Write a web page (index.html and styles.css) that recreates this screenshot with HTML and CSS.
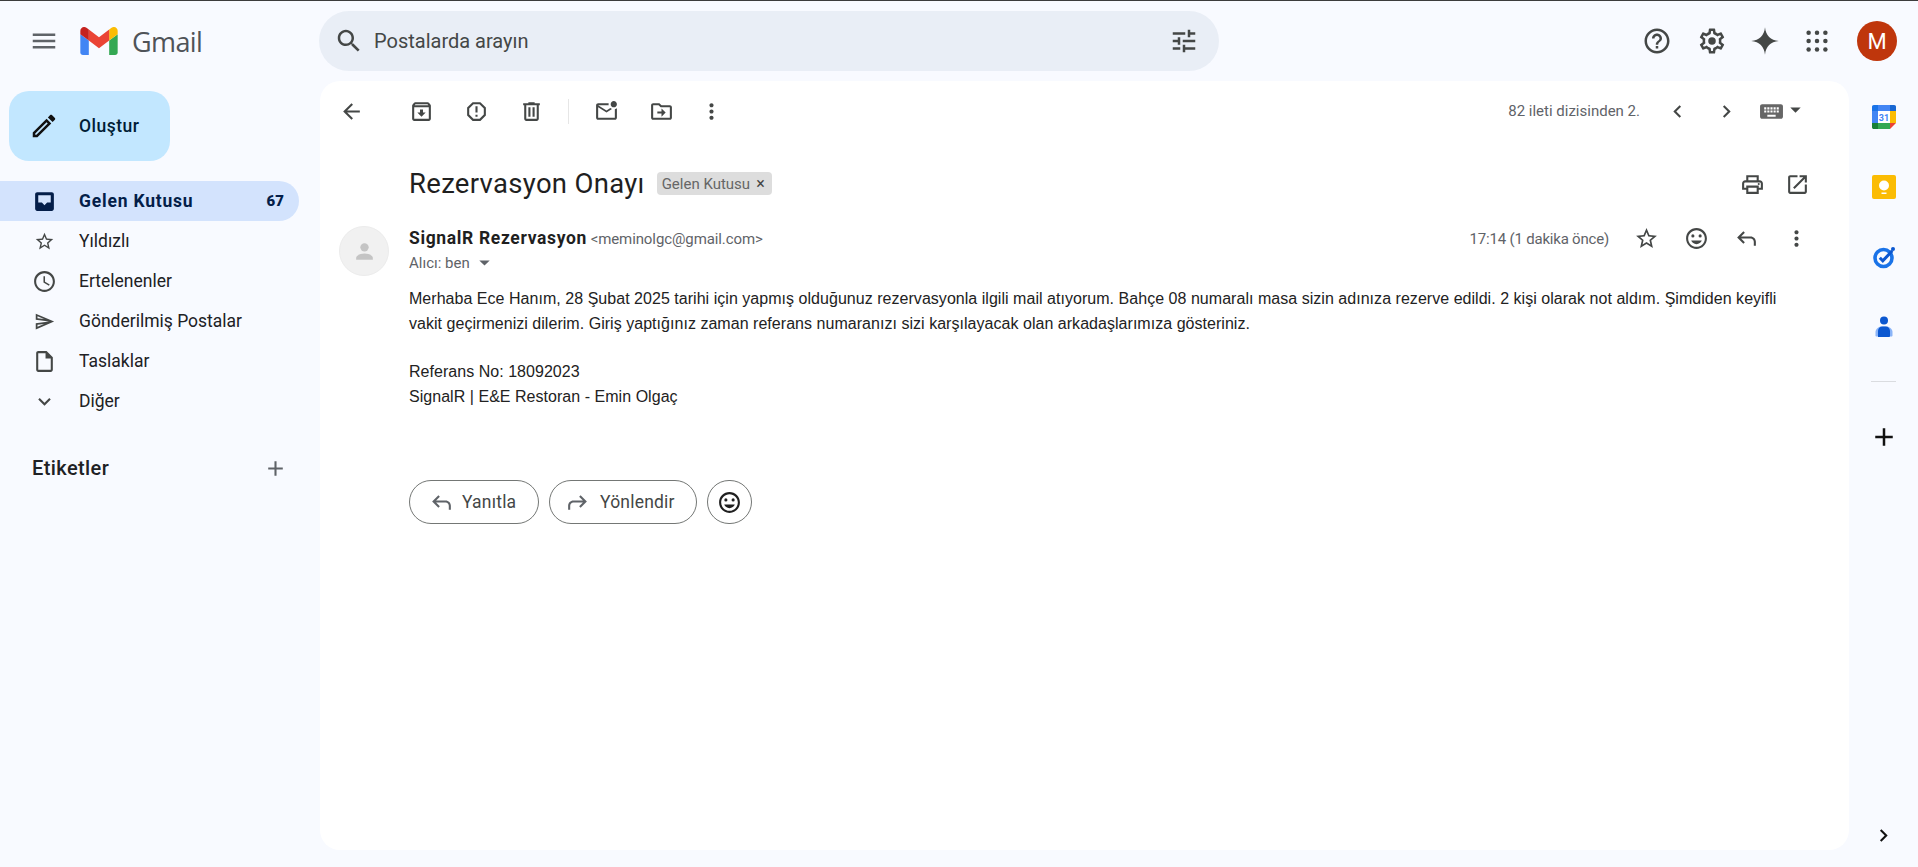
FILE: index.html
```html
<!DOCTYPE html>
<html lang="tr">
<head>
  <meta charset="utf-8">
  <title>Rezervasyon Onayı - Gmail</title>
  <link rel="stylesheet" href="styles.css">
</head>
<body>
  <!-- Icon sprite -->
  <svg class="sprite" xmlns="http://www.w3.org/2000/svg">
    <symbol id="i-menu" viewBox="0 0 24 24"><path d="M3 18h18v-2H3v2zm0-5h18v-2H3v2zm0-7v2h18V6H3z"/></symbol>
    <symbol id="i-search" viewBox="0 0 24 24"><path d="M15.5 14h-.79l-.28-.27C15.41 12.59 16 11.11 16 9.5 16 5.91 13.09 3 9.5 3S3 5.91 3 9.5 5.91 16 9.5 16c1.61 0 3.09-.59 4.23-1.57l.27.28v.79l5 4.99L20.49 19l-4.99-5zm-6 0C7.01 14 5 11.99 5 9.5S7.01 5 9.5 5 14 7.01 14 9.5 11.99 14 9.5 14z"/></symbol>
    <symbol id="i-tune" viewBox="0 0 24 24"><path d="M3 17v2h6v-2H3zM3 5v2h10V5H3zm10 16v-2h8v-2h-8v-2h-2v6h2zM7 9v2H3v2h4v2h2V9H7zm14 4v-2H11v2h10zm-6-4h2V7h4V5h-4V3h-2v6z"/></symbol>
    <symbol id="i-help" viewBox="0 0 24 24"><path d="M11 18h2v-2h-2v2zm1-16C6.48 2 2 6.48 2 12s4.48 10 10 10 10-4.48 10-10S17.52 2 12 2zm0 18c-4.41 0-8-3.59-8-8s3.59-8 8-8 8 3.59 8 8-3.59 8-8 8zm0-14c-2.21 0-4 1.79-4 4h2c0-1.1.9-2 2-2s2 .9 2 2c0 2-3 1.75-3 5h2c0-2.25 3-2.5 3-5 0-2.21-1.79-4-4-4z"/></symbol>
    <symbol id="i-settings" viewBox="0 0 24 24"><path d="M19.43 12.98c.04-.32.07-.64.07-.98 0-.34-.03-.66-.07-.98l2.11-1.65c.19-.15.24-.42.12-.64l-2-3.46c-.09-.16-.26-.25-.44-.25-.06 0-.12.01-.17.03l-2.49 1c-.52-.4-1.08-.73-1.69-.98l-.38-2.65C14.46 2.18 14.25 2 14 2h-4c-.25 0-.46.18-.49.42l-.38 2.65c-.61.25-1.17.59-1.69.98l-2.49-1c-.06-.02-.12-.03-.18-.03-.17 0-.34.09-.43.25l-2 3.46c-.13.22-.07.49.12.64l2.11 1.65c-.04.32-.07.65-.07.98 0 .33.03.66.07.98l-2.11 1.65c-.19.15-.24.42-.12.64l2 3.46c.09.16.26.25.44.25.06 0 .12-.01.17-.03l2.49-1c.52.4 1.08.73 1.69.98l.38 2.65c.03.24.24.42.49.42h4c.25 0 .46-.18.49-.42l.38-2.65c.61-.25 1.17-.59 1.69-.98l2.49 1c.06.02.12.03.18.03.17 0 .34-.09.43-.25l2-3.46c.12-.22.07-.49-.12-.64l-2.11-1.65zm-1.98-1.71c.04.31.05.52.05.73 0 .21-.02.43-.05.73l-.14 1.13.89.7 1.08.84-.7 1.21-1.27-.51-1.04-.42-.9.68c-.43.32-.84.56-1.25.73l-1.06.43-.16 1.13-.2 1.35h-1.4l-.19-1.35-.16-1.13-1.06-.43c-.43-.18-.83-.41-1.23-.71l-.91-.7-1.06.43-1.27.51-.7-1.21 1.08-.84.89-.7-.14-1.13c-.03-.31-.05-.54-.05-.74s.02-.43.05-.73l.14-1.13-.89-.7-1.08-.84.7-1.21 1.27.51 1.04.42.9-.68c.43-.32.84-.56 1.25-.73l1.06-.43.16-1.13.2-1.35h1.39l.19 1.35.16 1.13 1.06.43c.43.18.83.41 1.23.71l.91.7 1.06-.43 1.27-.51.7 1.21-1.07.85-.89.7.14 1.13z"/><circle cx="12" cy="12" r="3"/></symbol>
    <symbol id="i-spark" viewBox="0 0 24 24"><path d="M12 1c.6 6.5 4.5 10.4 11 11-6.5.6-10.4 4.5-11 11-.6-6.500-4.500-10.400-11-11 6.500-.6 10.400-4.500 11-11z"/></symbol>
    <symbol id="i-apps" viewBox="0 0 24 24"><circle cx="5.300" cy="5.300" r="1.800"/><circle cx="12" cy="5.300" r="1.800"/><circle cx="18.700" cy="5.300" r="1.800"/><circle cx="5.300" cy="12" r="1.800"/><circle cx="12" cy="12" r="1.800"/><circle cx="18.700" cy="12" r="1.800"/><circle cx="5.300" cy="18.700" r="1.800"/><circle cx="12" cy="18.700" r="1.800"/><circle cx="18.700" cy="18.700" r="1.800"/></symbol>
    <symbol id="i-pencil" viewBox="0 0 24 24"><path d="M3 17.25V21h3.75L17.81 9.94l-3.75-3.75L3 17.25zM5.920 19H5v-.92l9.060-9.060.92.92L5.920 19zM20.710 5.630l-2.340-2.340c-.2-.2-.45-.29-.71-.29s-.51.1-.7.29l-1.830 1.830 3.750 3.750 1.830-1.830c.39-.39.39-1.020 0-1.410z"/></symbol>
    <symbol id="i-inbox" viewBox="0 0 24 24"><path fill-rule="evenodd" d="M5 3h14c1.100 0 2 .9 2 2v14c0 1.100-.9 2-2 2H5c-1.100 0-2-.9-2-2V5c0-1.100.9-2 2-2zm1 3v7h3.500l2.500 2.500 2.500-2.500H18V6H6z"/></symbol>
    <symbol id="i-star" viewBox="0 0 24 24"><path d="M22 9.240l-7.190-.62L12 2 9.190 8.630 2 9.240l5.460 4.730L5.820 21 12 17.270 18.180 21l-1.630-7.030L22 9.240zM12 15.400l-3.760 2.270 1-4.280-3.320-2.880 4.380-.38L12 6.100l1.710 4.040 4.380.38-3.320 2.880 1 4.280L12 15.400z"/></symbol>
    <symbol id="i-clock" viewBox="0 0 24 24"><path d="M11.990 2C6.470 2 2 6.480 2 12s4.470 10 9.990 10C17.520 22 22 17.520 22 12S17.520 2 11.990 2zM12 20c-4.420 0-8-3.580-8-8s3.580-8 8-8 8 3.580 8 8-3.580 8-8 8zm.5-13H11v6l5.250 3.150.75-1.230-4.500-2.670z"/></symbol>
    <symbol id="i-send" viewBox="0 0 24 24"><path d="M4.010 6.030l7.510 3.220-7.520-1 .01-2.220m7.500 8.720L4 17.970v-2.220l7.510-1M2.010 3L2 10l15 2-15 2 .01 7L23 12 2.010 3z"/></symbol>
    <symbol id="i-draft" viewBox="0 0 24 24"><path d="M14 2H6c-1.100 0-2 .9-2 2v16c0 1.100.9 2 2 2h12c1.100 0 2-.9 2-2V8l-6-6zM6 20V4h7v5h5v11H6z"/></symbol>
    <symbol id="i-down" viewBox="0 0 24 24"><path d="M16.590 8.590L12 13.170 7.410 8.590 6 10l6 6 6-6z"/></symbol>
    <symbol id="i-add" viewBox="0 0 24 24"><path d="M19 13h-6v6h-2v-6H5v-2h6V5h2v6h6v2z"/></symbol>
    <symbol id="i-back" viewBox="0 0 24 24"><path d="M20 11H7.830l5.590-5.590L12 4l-8 8 8 8 1.410-1.410L7.830 13H20v-2z"/></symbol>
    <symbol id="i-archive" viewBox="0 0 24 24"><path d="M20.540 5.230l-1.390-1.680C18.880 3.210 18.470 3 18 3H6c-.47 0-.88.21-1.160.55L3.460 5.230C3.170 5.570 3 6.020 3 6.500V19c0 1.100.9 2 2 2h14c1.100 0 2-.9 2-2V6.500c0-.48-.17-.93-.46-1.270zM6.240 5h11.520l.81.97H5.440l.8-.97zM5 19V8h14v11H5zm8.450-9h-2.900v3H8l4 4 4-4h-2.550z"/></symbol>
    <symbol id="i-report" viewBox="0 0 24 24"><path d="M15.730 3H8.270L3 8.270v7.460L8.270 21h7.460L21 15.730V8.270L15.730 3zM19 14.900L14.900 19H9.100L5 14.900V9.100L9.100 5h5.800L19 9.100v5.800zM11 7h2v6h-2zM11 15h2v2h-2z"/></symbol>
    <symbol id="i-delete" viewBox="0 0 24 24"><path d="M15 4V3H9v1H4v2h1v13c0 1.100.9 2 2 2h10c1.100 0 2-.9 2-2V6h1V4h-5zm2 15H7V6h10v13zM9 8h2v9H9zm4 0h2v9h-2z"/></symbol>
    <symbol id="i-unread" viewBox="0 0 24 24"><path d="M22 8.980V18c0 1.100-.9 2-2 2H4c-1.100 0-2-.9-2-2V6c0-1.100.9-2 2-2h10.100c-.06.32-.1.66-.1 1s.04.68.1 1H4l8 5 3.670-2.290c.47.43 1.020.76 1.630.98L12 13 4 8v10h16V9.900c.74-.15 1.420-.48 2-.92zM16 5c0 1.660 1.340 3 3 3s3-1.340 3-3-1.340-3-3-3-3 1.340-3 3z"/></symbol>
    <symbol id="i-move" viewBox="0 0 24 24"><path d="M20 6h-8l-2-2H4c-1.100 0-1.990.9-1.990 2L2 18c0 1.100.9 2 2 2h16c1.100 0 2-.9 2-2V8c0-1.100-.9-2-2-2zm0 12H4V6h5.170l2 2H20v10zm-8-4H8v-2h4V9l4 4-4 4v-3z"/></symbol>
    <symbol id="i-more" viewBox="0 0 24 24"><path d="M12 8c1.100 0 2-.9 2-2s-.9-2-2-2-2 .9-2 2 .9 2 2 2zm0 2c-1.100 0-2 .9-2 2s.9 2 2 2 2-.9 2-2-.9-2-2-2zm0 6c-1.100 0-2 .9-2 2s.9 2 2 2 2-.9 2-2-.9-2-2-2z"/></symbol>
    <symbol id="i-left" viewBox="0 0 24 24"><path d="M15.410 7.410L14 6l-6 6 6 6 1.410-1.410L10.830 12z"/></symbol>
    <symbol id="i-right" viewBox="0 0 24 24"><path d="M10 6L8.590 7.410 13.170 12l-4.580 4.590L10 18l6-6z"/></symbol>
    <symbol id="i-drop" viewBox="0 0 24 24"><path d="M7 10l5 5 5-5z"/></symbol>
    <symbol id="i-keyboard" viewBox="0 0 24 24"><path d="M21 5H3c-1.100 0-2 .9-2 2v10c0 1.100.9 2 2 2h18c1.100 0 2-.9 2-2V7c0-1.100-.9-2-2-2zM11 8h2v2h-2V8zm0 3h2v2h-2v-2zM8 8h2v2H8V8zm0 3h2v2H8v-2zm-1 2H5v-2h2v2zm0-3H5V8h2v2zm9 7H8v-2h8v2zm0-4h-2v-2h2v2zm0-3h-2V8h2v2zm3 3h-2v-2h2v2zm0-3h-2V8h2v2z"/></symbol>
    <symbol id="i-print" viewBox="0 0 24 24"><path d="M19 8h-1V3H6v5H5c-1.660 0-3 1.340-3 3v6h4v4h12v-4h4v-6c0-1.660-1.340-3-3-3zM8 5h8v3H8V5zm8 12v2H8v-4h8v2zm2-2v-2H6v2H4v-4c0-.55.45-1 1-1h14c.55 0 1 .45 1 1v4h-2z"/><circle cx="18" cy="11.500" r="1"/></symbol>
    <symbol id="i-open" viewBox="0 0 24 24"><path d="M19 19H5V5h7V3H5c-1.110 0-2 .9-2 2v14c0 1.100.89 2 2 2h14c1.100 0 2-.9 2-2v-7h-2v7zM14 3v2h3.590l-9.830 9.830 1.410 1.410L19 6.410V10h2V3h-7z"/></symbol>
    <symbol id="i-smile" viewBox="0 0 24 24"><path d="M11.990 2C6.470 2 2 6.480 2 12s4.470 10 9.990 10C17.520 22 22 17.520 22 12S17.520 2 11.990 2zM12 20c-4.420 0-8-3.580-8-8s3.580-8 8-8 8 3.580 8 8-3.580 8-8 8zm0-2.500c2.330 0 4.300-1.460 5.110-3.500H6.890c.8 2.040 2.780 3.500 5.110 3.500z"/><circle cx="15.500" cy="9.500" r="1.500"/><circle cx="8.500" cy="9.500" r="1.500"/></symbol>
    <symbol id="i-reply" viewBox="0 0 24 24"><path d="M21 19v-4c0-2.760-2.240-5-5-5H6.830l3.580-3.590L9 5l-6 6 6 6 1.410-1.410L6.830 12H16c1.650 0 3 1.350 3 3v4h2z"/></symbol>
    <symbol id="i-forward" viewBox="0 0 24 24"><path d="M3 19v-4c0-2.760 2.240-5 5-5h9.170l-3.580-3.590L15 5l6 6-6 6-1.410-1.410L17.170 12H8c-1.650 0-3 1.350-3 3v4H3z"/></symbol>
  </svg>

  <header class="topbar">
    <div class="brand">
      <svg class="icon icon-lg grey menu-btn"><use href="#i-menu"/></svg>
      <svg class="gmail-logo" viewBox="52 42 88 66">
        <path fill="#4285f4" d="M58 108h14V74L52 59v43c0 3.320 2.690 6 6 6"/>
        <path fill="#34a853" d="M120 108h14c3.320 0 6-2.690 6-6V59l-20 15"/>
        <path fill="#fbbc04" d="M120 48v26l20-15v-8c0-7.420-8.470-11.650-14.400-7.200"/>
        <path fill="#ea4335" d="M72 74V48l24 18 24-18v26L96 92"/>
        <path fill="#c5221f" d="M52 51v8l20 15V48l-5.600-4.200c-5.940-4.450-14.400-.22-14.400 7.200"/>
      </svg>
      <span class="gmail-word">Gmail</span>
    </div>
    <div class="search">
      <svg class="icon icon-lg dark"><use href="#i-search"/></svg>
      <span class="search-text">Postalarda arayın</span>
      <svg class="icon icon-lg dark"><use href="#i-tune"/></svg>
    </div>
    <div class="top-actions">
      <svg class="icon icon-lg dark"><use href="#i-help"/></svg>
      <svg class="icon icon-lg dark"><use href="#i-settings"/></svg>
      <svg class="icon icon-lg dark spark"><use href="#i-spark"/></svg>
      <svg class="icon icon-lg dark apps"><use href="#i-apps"/></svg>
      <div class="avatar">M</div>
    </div>
  </header>

  <div class="app">
    <aside class="sidebar">
      <button class="compose">
        <svg class="icon icon-lg black"><use href="#i-pencil"/></svg>
        Oluştur
      </button>

      <nav class="nav">
        <a class="nav-item active"><svg class="icon"><use href="#i-inbox"/></svg><span>Gelen Kutusu</span><b class="count">67</b></a>
        <a class="nav-item"><svg class="icon icon-s"><use href="#i-star"/></svg><span>Yıldızlı</span></a>
        <a class="nav-item"><svg class="icon"><use href="#i-clock"/></svg><span>Ertelenenler</span></a>
        <a class="nav-item"><svg class="icon icon-s"><use href="#i-send"/></svg><span>Gönderilmiş Postalar</span></a>
        <a class="nav-item"><svg class="icon"><use href="#i-draft"/></svg><span>Taslaklar</span></a>
        <a class="nav-item"><svg class="icon"><use href="#i-down"/></svg><span>Diğer</span></a>
      </nav>

      <div class="labels-head">
        <span>Etiketler</span>
        <svg class="icon grey"><use href="#i-add"/></svg>
      </div>
    </aside>

    <main class="card">
      <div class="toolbar">
        <span class="tool"><svg class="icon"><use href="#i-back"/></svg></span>
        <span class="tool tool-first"><svg class="icon"><use href="#i-archive"/></svg></span>
        <span class="tool"><svg class="icon"><use href="#i-report"/></svg></span>
        <span class="tool"><svg class="icon"><use href="#i-delete"/></svg></span>
        <span class="tool-sep"></span>
        <span class="tool"><svg class="icon"><use href="#i-unread"/></svg></span>
        <span class="tool"><svg class="icon"><use href="#i-move"/></svg></span>
        <span class="tool tool-more"><svg class="icon"><use href="#i-more"/></svg></span>
        <div class="pager">
          <span class="pager-text">82 ileti dizisinden 2.</span>
          <svg class="icon"><use href="#i-left"/></svg>
          <svg class="icon"><use href="#i-right"/></svg>
          <span class="kbd">
            <svg class="icon key"><use href="#i-keyboard"/></svg>
            <svg class="icon drop"><use href="#i-drop"/></svg>
          </span>
        </div>
      </div>

      <div class="subject-row">
        <h1 class="subject">Rezervasyon Onayı</h1>
        <span class="label-chip">Gelen Kutusu <i>×</i></span>
        <div class="subject-actions">
          <svg class="icon"><use href="#i-print"/></svg>
          <svg class="icon"><use href="#i-open"/></svg>
        </div>
      </div>

      <section class="message">
        <div class="msg-avatar">
          <svg viewBox="0 0 24 24"><circle cx="12" cy="8" r="4"/><path d="M4 20v-2c0-2.700 5.300-4 8-4s8 1.300 8 4v2H4z"/></svg>
        </div>
        <div class="msg-main">
          <div class="msg-head">
            <div>
              <div class="sender"><b>SignalR Rezervasyon</b> <span>&lt;meminolgc@gmail.com&gt;</span></div>
              <div class="recipient">Alıcı: ben <svg class="icon"><use href="#i-drop"/></svg></div>
            </div>
            <div class="msg-meta">
              <span class="msg-time">17:14 (1 dakika önce)</span>
              <svg class="icon"><use href="#i-star"/></svg>
              <svg class="icon"><use href="#i-smile"/></svg>
              <svg class="icon"><use href="#i-reply"/></svg>
              <svg class="icon"><use href="#i-more"/></svg>
            </div>
          </div>

          <div class="msg-body">
            <p>Merhaba Ece Hanım, 28 Şubat 2025 tarihi için yapmış olduğunuz rezervasyonla ilgili mail atıyorum. Bahçe 08 numaralı masa sizin adınıza rezerve edildi. 2 kişi olarak not aldım. Şimdiden keyifli vakit geçirmenizi dilerim. Giriş yaptığınız zaman referans numaranızı sizi karşılayacak olan arkadaşlarımıza gösteriniz.</p>
            <p>Referans No: 18092023<br>SignalR | E&amp;E Restoran - Emin Olgaç</p>
          </div>

          <div class="reply-row">
            <button class="pill pill-reply"><svg class="icon"><use href="#i-reply"/></svg>Yanıtla</button>
            <button class="pill pill-forward"><svg class="icon"><use href="#i-forward"/></svg>Yönlendir</button>
            <button class="pill pill-emoji"><svg class="icon"><use href="#i-smile"/></svg></button>
          </div>
        </div>
      </section>
    </main>

    <aside class="rail">
      <div class="rail-item">
        <svg class="rail-icon" viewBox="0 0 24 24">
          <path fill="#fff" d="M18 6H6v12h12z"/>
          <path fill="#1a73e8" d="M6 0H1.800C.8 0 0 .8 0 1.800V6h6z"/>
          <path fill="#4285f4" d="M6 0h12v6H6zM0 6h6v12H0z"/>
          <path fill="#1967d2" d="M18 0v6h6V1.800C24 .8 23.200 0 22.200 0z"/>
          <path fill="#fbbc04" d="M18 6h6v12h-6z"/>
          <path fill="#34a853" d="M6 18h12v6H6z"/>
          <path fill="#188038" d="M0 18v4.200C0 23.200.8 24 1.800 24H6v-6z"/>
          <path fill="#ea4335" d="M18 18h6l-6 6z"/>
          <text x="12" y="16" class="cal-num">31</text>
        </svg>
      </div>
      <div class="rail-item">
        <svg class="rail-icon" viewBox="0 0 24 24">
          <rect width="24" height="24" rx="2" fill="#fbbc04"/>
          <circle cx="12" cy="10.500" r="5" fill="#fff"/>
          <path fill="#fff" d="M9.500 17.500h5V19h-5z"/>
        </svg>
      </div>
      <div class="rail-item">
        <svg class="rail-icon" viewBox="0 0 24 24">
          <circle cx="11.500" cy="13" r="8.500" fill="none" stroke="#1a73e8" stroke-width="3.600"/>
          <path fill="none" stroke="#0b57d0" stroke-width="3" d="M7.800 12.800l3 3 9.500-10"/>
          <circle cx="21" cy="4" r="2" fill="#0b57d0"/>
        </svg>
      </div>
      <div class="rail-item">
        <svg class="rail-icon" viewBox="0 0 24 24">
          <circle cx="12" cy="5.500" r="4" fill="#0b57d0"/>
          <path fill="#8ab4f8" d="M3.500 21v-4c0-3 3-5.500 6-5.500h5c3 0 6 2.500 6 5.500v3.500c0 .5-.5 1-1 1h-15c-.5 0-1-.2-1-.5z"/>
          <path fill="#0b57d0" d="M6 22v-6c0-2.500 2-4.500 4.500-4.500h3c2.500 0 4.500 2 4.500 4.500v5c0 .5-.5 1-1 1z"/>
        </svg>
      </div>
      <div class="rail-sep"></div>
      <svg class="icon icon-lg black rail-add"><use href="#i-add"/></svg>
      <svg class="icon black rail-toggle"><use href="#i-right"/></svg>
    </aside>
  </div>
</body>
</html>
```

FILE: styles.css
```css
* {
  box-sizing: border-box;
}

html, body {
  height: 100%;
}

body {
  margin: 0;
  overflow: hidden;
  font-family: Roboto, "Liberation Sans", Arial, sans-serif;
  background-color: #f8faff;
  color: #202124;
  border-top: 1px solid #3c3c3c;
  display: flex;
  flex-direction: column;
}

.sprite {
  display: none;
}

.icon {
  width: 25px;
  height: 25px;
  flex: none;
  fill: #444746;
  display: block;
}

.icon-lg {
  width: 30px;
  height: 30px;
}

.icon-s {
  width: 21px;
  height: 21px;
  margin: 0 2px;
}

.grey {
  fill: #5f6368;
}

.dark {
  fill: #444746;
}

.black {
  fill: #111;
}

/* Top bar */
.topbar {
  height: 80px;
  flex: none;
  display: flex;
  align-items: center;
}

.brand {
  width: 319px;
  flex: none;
  display: flex;
  align-items: center;
  padding-left: 29px;
}

.gmail-logo {
  width: 38px;
  height: 28px;
  margin-left: 21px;
}

.gmail-word {
  margin-left: 14px;
  font-family: "Open Sans", sans-serif;
  font-size: 27px;
  color: #4f5358;
  letter-spacing: -0.6px;
}

.search {
  width: 900px;
  height: 60px;
  flex: none;
  display: flex;
  align-items: center;
  padding: 0 20px 0 15px;
  background-color: #e9eef6;
  border-radius: 30px;
}

.search-text {
  flex: 1;
  margin-left: 10px;
  font-size: 20px;
  color: #444746;
}

.top-actions {
  margin-left: auto;
  padding-right: 21px;
  display: flex;
  align-items: center;
  gap: 25px;
}

.spark {
  margin-left: -2px;
}

.apps {
  margin-left: -3px;
}

.avatar {
  width: 40px;
  height: 40px;
  border-radius: 50%;
  background-color: #bf360c;
  color: #fff;
  font-size: 22px;
  display: flex;
  align-items: center;
  justify-content: center;
}

/* Main area */
.app {
  flex: 1;
  display: flex;
  min-height: 0;
}

.sidebar {
  width: 320px;
  flex: none;
}

.compose {
  width: 161px;
  height: 70px;
  margin: 10px 0 0 9px;
  padding: 0 0 0 20px;
  display: flex;
  align-items: center;
  gap: 20px;
  border: none;
  border-radius: 20px;
  background-color: #c2e7ff;
  color: #001d35;
  font-family: inherit;
  font-size: 17.5px;
  font-weight: 500;
  letter-spacing: 0.5px;
}

.nav {
  margin-top: 20px;
}

.nav-item {
  width: 299px;
  height: 40px;
  padding: 0 15px 0 32px;
  display: flex;
  align-items: center;
  gap: 22px;
  border-radius: 0 20px 20px 0;
  font-size: 17.5px;
  color: #202124;
}

.nav-item.active {
  background-color: #d3e3fd;
  color: #041e49;
  font-weight: 700;
  letter-spacing: 0.8px;
}

.nav-item.active .icon {
  fill: #041e49;
}

.count {
  margin-left: auto;
  font-size: 15px;
  letter-spacing: 0;
}

.labels-head {
  width: 288px;
  height: 40px;
  margin-top: 27px;
  padding-left: 32px;
  display: flex;
  align-items: center;
  justify-content: space-between;
  font-size: 20px;
  font-weight: 500;
  letter-spacing: 0.4px;
}

/* Message card */
.card {
  flex: 1;
  min-width: 0;
  margin-bottom: 17px;
  background-color: #fff;
  border-radius: 20px;
}

.toolbar {
  height: 60px;
  padding: 0 41px 0 4px;
  display: flex;
  align-items: center;
}

.tool {
  width: 55px;
  display: flex;
  justify-content: center;
}

.tool-first {
  margin-left: 15px;
}

.tool-sep {
  width: 1px;
  height: 25px;
  margin: 0 10px 0 9px;
  background-color: #e6e6e6;
}

.tool-more {
  margin-left: -5px;
}

.pager {
  margin-left: auto;
  display: flex;
  align-items: center;
  gap: 24px;
}

.pager-text {
  margin-right: 1px;
  font-size: 15px;
  color: #5f6368;
}

.kbd {
  margin-left: -4px;
  display: flex;
  align-items: center;
}

.kbd .key {
  fill: #666;
}

.kbd .drop {
  margin-left: -1px;
  transform: translateY(-2px);
}

.subject-row {
  height: 85px;
  padding: 0 39px 0 89px;
  display: flex;
  align-items: center;
}

.subject {
  margin: 0;
  font-size: 27.5px;
  font-weight: 400;
  letter-spacing: 0.3px;
  color: #1f1f1f;
}

.label-chip {
  height: 23px;
  margin-left: 12px;
  padding: 0 7px 0 5px;
  display: flex;
  align-items: center;
  gap: 6px;
  border-radius: 4px;
  background-color: #dddddd;
  font-size: 15px;
  color: #666;
}

.label-chip i {
  font-style: normal;
  font-size: 16px;
  color: #444;
}

.subject-actions {
  margin-left: auto;
  margin-top: 1px;
  display: flex;
  gap: 20px;
}

.message {
  padding: 0 40px 0 19px;
  display: flex;
  gap: 20px;
}

.msg-avatar {
  width: 50px;
  height: 50px;
  flex: none;
  display: flex;
  align-items: center;
  justify-content: center;
  border-radius: 50%;
  background-color: #f1f1f1;
  border: 1px solid #ececec;
}

.msg-avatar svg {
  width: 25px;
  height: 25px;
  fill: #c4c4c4;
}

.msg-main {
  flex: 1;
  min-width: 0;
}

.msg-head {
  display: flex;
  justify-content: space-between;
  height: 50px;
}

.sender {
  height: 24px;
  line-height: 25px;
  font-size: 15px;
  letter-spacing: -0.1px;
  color: #5f6368;
}

.sender b {
  font-size: 17.5px;
  letter-spacing: 0.65px;
  color: #1f1f1f;
}

.recipient {
  height: 25px;
  display: flex;
  align-items: center;
  gap: 2px;
  font-size: 15px;
  color: #5f6368;
}

.recipient .icon {
  fill: #5f6368;
}

.msg-meta {
  height: 25px;
  display: flex;
  align-items: center;
  gap: 25px;
}

.msg-time {
  font-size: 15px;
  letter-spacing: -0.2px;
  color: #5f6368;
}

.msg-body {
  margin-top: 10px;
  max-width: 1380px;
  font-family: "Liberation Sans", Arial, sans-serif;
  font-size: 16px;
  line-height: 25px;
  letter-spacing: 0.035px;
  color: #222;
}

.msg-body p {
  margin: 0 0 23px;
}

.reply-row {
  margin-top: 71px;
  display: flex;
  gap: 10px;
}

.pill {
  height: 44px;
  display: flex;
  align-items: center;
  border: 1px solid #747775;
  border-radius: 22px;
  background-color: #fff;
  font-family: inherit;
  font-size: 17.5px;
  font-weight: 400;
  letter-spacing: 0.2px;
  color: #444746;
}

.pill .icon {
  fill: #5f6368;
}

.pill-reply {
  width: 130px;
  padding: 0 0 0 19px;
  gap: 8px;
}

.pill-forward {
  width: 148px;
  padding: 0 0 0 15px;
  gap: 10px;
}

.pill-emoji {
  width: 45px;
  padding: 0;
  justify-content: center;
}

.pill-emoji .icon {
  fill: #1f1f1f;
}

/* Right rail */
.rail {
  width: 69px;
  flex: none;
  display: flex;
  flex-direction: column;
  align-items: center;
  padding-top: 1px;
}

.rail-item {
  height: 70px;
  display: flex;
  align-items: center;
}

.rail-icon {
  width: 24px;
  height: 24px;
  display: block;
}

.cal-num {
  font-family: Roboto, sans-serif;
  font-size: 9px;
  font-weight: 700;
  fill: #4285f4;
  text-anchor: middle;
}

.rail-sep {
  width: 25px;
  height: 1px;
  margin-top: 19px;
  background-color: #dadce0;
}

.rail-add {
  margin-top: 40px;
}

.rail-toggle {
  margin-top: auto;
  margin-bottom: 19px;
}
```
